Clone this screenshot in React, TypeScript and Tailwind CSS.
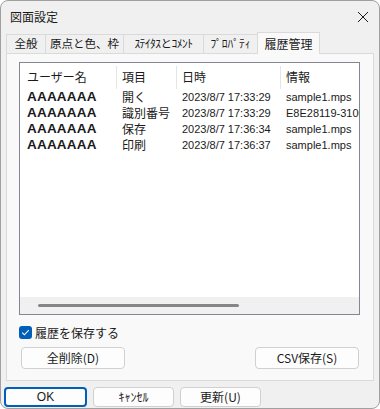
import React from "react";

const jp = { fontFamily: '"Noto Sans CJK JP", "Noto Sans", sans-serif' };
const lat = { fontFamily: '"Liberation Sans", "Noto Sans CJK JP", sans-serif' };

const rows = [
  { u: "AAAAAAA", k: "開く", d: "2023/8/7 17:33:29", i: "sample1.mps" },
  { u: "AAAAAAA", k: "識別番号", d: "2023/8/7 17:33:29", i: "E8E28119-3100-4A" },
  { u: "AAAAAAA", k: "保存", d: "2023/8/7 17:36:34", i: "sample1.mps" },
  { u: "AAAAAAA", k: "印刷", d: "2023/8/7 17:36:37", i: "sample1.mps" },
];

export default function App() {
  return (
    <div
      className="w-[380px] h-[409px] bg-[#f0f0f0] border border-[#a0a0a0] rounded-[8px] overflow-hidden flex flex-col text-[#1a1a1a]"
      style={jp}
    >
      {/* Title bar */}
      <div className="h-[31px] flex items-center justify-between pl-[9px] pr-[8px] shrink-0">
        <span className="text-[12px] leading-none">図面設定</span>
        <svg width="12" height="12" viewBox="0 0 12 12" className="mr-[2px]">
          <path d="M1 1 L11 11 M11 1 L1 11" stroke="#1a1a1a" strokeWidth="1" />
        </svg>
      </div>

      {/* Tabs */}
      <div className="ml-[5px] h-[21px] flex items-end shrink-0 text-[11.5px] leading-none relative z-10">
        <div className="w-[39px] h-[19px] flex items-center justify-center border-l border-t border-[#dadada]">全般</div>
        <div className="w-[78px] h-[19px] flex items-center justify-center border-l border-t border-[#dadada]">原点と色、枠</div>
        <div className="w-[80px] h-[19px] flex items-center justify-center border-l border-t border-[#dadada] tracking-[-0.5px]">ｽﾃｲﾀｽとｺﾒﾝﾄ</div>
        <div className="w-[54px] h-[19px] flex items-center justify-center border-l border-t border-[#dadada]">ﾌﾟﾛﾊﾟﾃｨ</div>
        <div className="w-[63px] h-[22px] -mb-[1px] flex items-center justify-center border-l border-t border-r border-[#dadada] bg-[#f9f9f9] text-[12px]">履歴管理</div>
      </div>

      {/* Panel */}
      <div className="mx-[5px] h-[328px] border border-[#dadada] bg-[#f9f9f9] flex flex-col shrink-0">
        {/* List */}
        <div className="ml-[12px] mt-[8px] w-[341px] h-[253px] border border-[#828790] bg-white flex flex-col overflow-hidden">
          <div className="h-[26px] flex items-center text-[12px] shrink-0 pt-[2px]">
            <div className="w-[97px] pl-[7px] h-[23px] flex items-center border-r border-[#e5e5e5]">ユーザー名</div>
            <div className="w-[60px] pl-[5px] h-[23px] flex items-center border-r border-[#e5e5e5]">項目</div>
            <div className="w-[104px] pl-[5px] h-[23px] flex items-center border-r border-[#e5e5e5]">日時</div>
            <div className="flex-1 pl-[5px] h-[23px] flex items-center">情報</div>
          </div>
          <div className="flex-1 flex flex-col">
            {rows.map((r, idx) => (
              <div key={idx} className="h-[16px] flex items-center whitespace-nowrap">
                <div className="w-[97px] pl-[7px] text-[13.5px] font-bold leading-none tracking-[0.2px]" style={lat}>{r.u}</div>
                <div className="w-[60px] pl-[5px] text-[12px] leading-none">{r.k}</div>
                <div className="w-[104px] pl-[5px] text-[11px] leading-none" style={lat}>{r.d}</div>
                <div className="flex-1 pl-[5px] text-[11px] leading-none overflow-hidden" style={lat}>{r.i}</div>
              </div>
            ))}
          </div>
          <div className="h-[17px] bg-[#f0f0f0] flex items-center shrink-0">
            <div className="ml-[18px] w-[201px] h-[3px] rounded-full bg-[#858585]" />
          </div>
        </div>

        {/* Checkbox */}
        <div className="ml-[12px] mt-[11px] flex items-center gap-[3px] h-[13px]">
          <div className="w-[13px] h-[13px] rounded-[3px] bg-[#005fb8] flex items-center justify-center">
            <svg width="9" height="9" viewBox="0 0 9 9">
              <path d="M1.2 4.6 L3.4 6.8 L7.8 2.2" stroke="white" strokeWidth="1.1" fill="none" />
            </svg>
          </div>
          <span className="text-[12px] leading-none">履歴を保存する</span>
        </div>

        {/* Buttons */}
        <div className="mt-[8px] flex justify-between pl-[14px] pr-[14px]">
          <div className="w-[104px] h-[22px] rounded-[4px] border border-[#d0d0d0] bg-[#fdfdfd] flex items-center justify-center text-[12px] leading-none">全削除(D)</div>
          <div className="w-[104px] h-[22px] rounded-[4px] border border-[#d0d0d0] bg-[#fdfdfd] flex items-center justify-center text-[12px] leading-none">CSV保存(S)</div>
        </div>
      </div>

      {/* Bottom buttons */}
      <div className="mt-[6px] ml-[3px] flex gap-[6px]">
        <div className="w-[83px] h-[20px] rounded-[4px] border-2 border-[#005fb8] bg-[#fdfdfd] flex items-center justify-center text-[12px] leading-none" style={lat}>OK</div>
        <div className="w-[81px] h-[20px] rounded-[4px] border border-[#d0d0d0] bg-[#fdfdfd] flex items-center justify-center text-[12px] leading-none">ｷｬﾝｾﾙ</div>
        <div className="w-[81px] h-[20px] rounded-[4px] border border-[#d0d0d0] bg-[#fdfdfd] flex items-center justify-center text-[12px] leading-none">更新(U)</div>
      </div>
    </div>
  );
}
